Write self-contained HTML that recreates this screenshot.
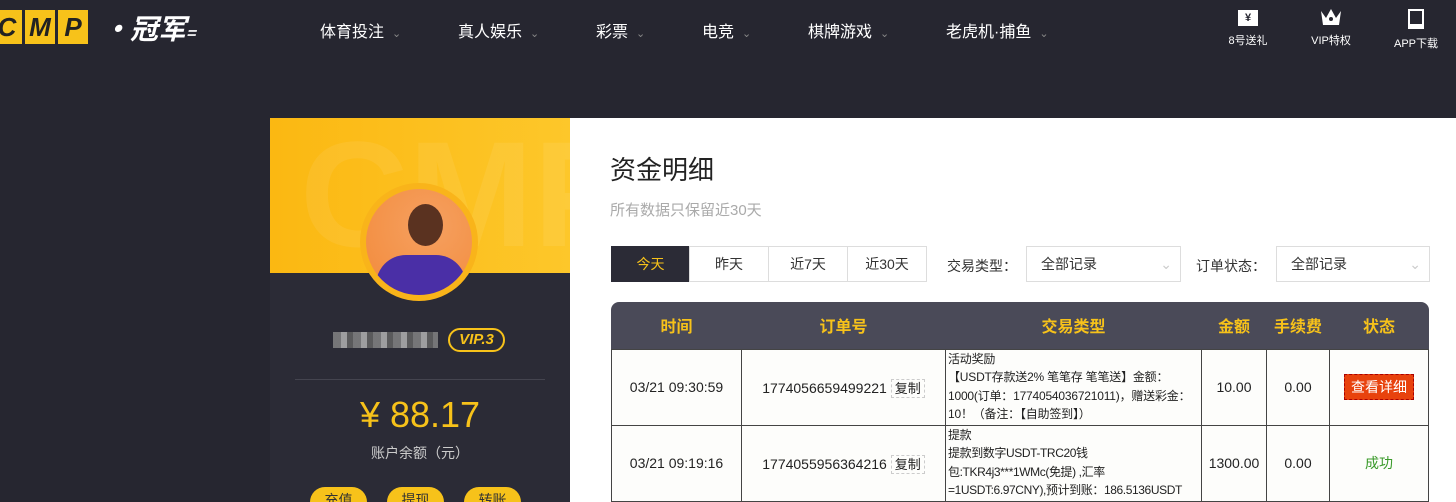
<!DOCTYPE html><html><head><meta charset="utf-8"><style>
*{margin:0;padding:0;box-sizing:border-box}
html,body{width:1456px;height:502px;overflow:hidden}
body{background:#262630;font-family:"Liberation Sans","Noto Sans CJK SC",sans-serif;position:relative;color:#333}
.a{position:absolute}
.nav{color:#fff;font-size:16px;top:18px}
.nav span{color:#888;font-size:11px;margin-left:8px}
.ic{color:#fff;font-size:11px;text-align:center;top:6px;width:60px}
.side{left:270px;top:118px;width:300px;height:384px;background:#2b2b36;overflow:hidden}
.main{left:570px;top:118px;width:886px;height:384px;background:#fff}
.tb{top:246px;height:36px;border:1px solid #ddd;font-size:14px;line-height:34px;text-align:center;background:#fff}
table{position:absolute;left:611px;top:302px;width:818px;border-collapse:collapse;font-size:14px;table-layout:fixed}
th{color:#f7c21a;height:47px;font-size:16px;font-weight:bold}
td{border:1px solid #444;background:#fdfdfb;text-align:center;height:76px;color:#222;overflow:hidden}
td.l{text-align:left;font-size:12px;line-height:18.5px;padding:0 2px;vertical-align:top;letter-spacing:-0.2px}
.lb{display:inline-block;background:#f7c21a;color:#222;width:30px;height:34px;text-align:center;line-height:34px;margin-right:3px}
</style></head><body>
<div class="a" style="left:-8px;top:10px;font:italic 900 26px 'Liberation Sans'"><span class="lb">C</span><span class="lb">M</span><span class="lb">P</span></div>
<div class="a" style="left:102px;top:8px;font:italic bold 28px 'Noto Sans CJK SC';color:#fff">·冠军<span style="font-size:16px">=</span></div>
<div class="a nav" style="left:320px">体育投注<span>⌄</span></div>
<div class="a nav" style="left:458px">真人娱乐<span>⌄</span></div>
<div class="a nav" style="left:596px">彩票<span>⌄</span></div>
<div class="a nav" style="left:702px">电竞<span>⌄</span></div>
<div class="a nav" style="left:808px">棋牌游戏<span>⌄</span></div>
<div class="a nav" style="left:946px">老虎机·捕鱼<span>⌄</span></div>
<div class="a ic" style="left:1218px"><div style="margin:4px auto 6px;width:20px;height:16px;background:#fff;color:#262630;font-size:11px;font-weight:bold;line-height:16px">¥</div>8号送礼</div>
<div class="a ic" style="left:1301px"><svg width="24" height="22" viewBox="0 0 24 20" style="display:block;margin:0 auto 4px"><path d="M2 4L7 11L12 2L17 11L22 4L20 18H4Z" fill="#fff"/><circle cx="12" cy="12" r="2" fill="#262630"/></svg>VIP特权</div>
<div class="a ic" style="left:1386px"><div style="margin:3px auto 6px;width:16px;height:20px;border:2px solid #fff;border-bottom-width:5px"></div>APP下载</div>
<div class="a side">
<div style="height:155px;background:linear-gradient(90deg,#fbb812,#fdc72a);position:relative;overflow:hidden"><div class="a" style="left:30px;top:-10px;font:bold 150px 'Liberation Sans';color:rgba(255,255,255,.07)">CMP</div></div>
<div class="a" style="left:90px;top:65px;width:118px;height:118px;border-radius:50%;background:#f9b41a;padding:6px"><div style="width:100%;height:100%;border-radius:50%;background:radial-gradient(circle at 60% 35%,#f6a060,#f28a3a);overflow:hidden;position:relative"><div class="a" style="left:42px;top:15px;width:35px;height:42px;border-radius:50%;background:#5a3220"></div><div class="a" style="left:10px;top:66px;width:90px;height:50px;border-radius:30px 30px 0 0;background:#4a2fa6"></div></div></div>
<div class="a" style="left:63px;top:214px;width:105px;height:16px;background:repeating-linear-gradient(90deg,#888 0 8px,#bbb 8px 14px,#666 14px 20px);opacity:.8"></div>
<div class="a" style="left:178px;top:210px;width:57px;height:24px;border:2px solid #f7c21a;border-radius:12px;color:#f7c21a;font:italic bold 15px 'Liberation Sans';text-align:center;line-height:20px">VIP.3</div>
<div class="a" style="left:25px;top:261px;width:250px;height:1px;background:#44444f"></div>
<div class="a" style="left:0;top:276px;width:300px;text-align:center;color:#f7c21a;font-size:36px">¥ 88.17</div>
<div class="a" style="left:0;top:325px;width:300px;text-align:center;color:#ccc;font-size:14px">账户余额（元）</div>
<div class="a" style="left:40px;top:369px;width:57px;height:30px;border-radius:15px;background:#f7c21a;text-align:center;font-size:14px;line-height:26px">充值</div>
<div class="a" style="left:117px;top:369px;width:57px;height:30px;border-radius:15px;background:#f7c21a;text-align:center;font-size:14px;line-height:26px">提现</div>
<div class="a" style="left:194px;top:369px;width:57px;height:30px;border-radius:15px;background:#f7c21a;text-align:center;font-size:14px;line-height:26px">转账</div>
</div>
<div class="a main"></div>
<div class="a" style="left:610px;top:150px;font-size:26px;color:#222">资金明细</div>
<div class="a" style="left:610px;top:199px;font-size:15px;color:#aaa">所有数据只保留近30天</div>
<div class="a tb" style="left:611px;width:79px;background:#2b2b36;color:#f7c21a;border-color:#2b2b36">今天</div>
<div class="a tb" style="left:689px;width:80px">昨天</div>
<div class="a tb" style="left:768px;width:80px">近7天</div>
<div class="a tb" style="left:847px;width:80px">近30天</div>
<div class="a" style="left:947px;top:256px;font-size:14px">交易类型：</div>
<div class="a tb" style="left:1026px;width:155px;text-align:left;padding-left:14px">全部记录<span style="float:right;margin-right:8px;color:#ccc">⌄</span></div>
<div class="a" style="left:1196px;top:256px;font-size:14px">订单状态：</div>
<div class="a tb" style="left:1276px;width:154px;text-align:left;padding-left:14px">全部记录<span style="float:right;margin-right:8px;color:#ccc">⌄</span></div>
<div class="a" style="left:611px;top:302px;width:818px;height:47px;background:#4a4a58;border-radius:8px 8px 0 0"></div>
<table><colgroup><col style="width:130px"><col style="width:204px"><col style="width:256px"><col style="width:65px"><col style="width:63px"><col></colgroup>
<tr><th>时间</th><th>订单号</th><th>交易类型</th><th>金额</th><th>手续费</th><th>状态</th></tr>
<tr><td>03/21 09:30:59</td><td>1774056659499221 <span style="border:1px dashed #ccc;font-size:13px;padding:1px 3px">复制</span></td><td class="l"><div style="height:75px;overflow:hidden">活动奖励<br>【USDT存款送2% 笔笔存 笔笔送】金额：1000(订单：1774054036721011)，赠送彩金：10！（备注：【自助签到】）</div></td><td>10.00</td><td>0.00</td><td><span style="background:#e8420d;color:#fff;padding:4px 6px;border:1px dashed #a00">查看详细</span></td></tr>
<tr><td>03/21 09:19:16</td><td>1774055956364216 <span style="border:1px dashed #ccc;font-size:13px;padding:1px 3px">复制</span></td><td class="l"><div style="height:75px;overflow:hidden;letter-spacing:-0.4px">提款<br>提款到数字USDT-TRC20钱<br>包:TKR4j3***1WMc(免提) ,汇率<br>=1USDT:6.97CNY),预计到账：186.5136USDT</div></td><td>1300.00</td><td>0.00</td><td style="color:#3a9a2a">成功</td></tr></table>
</body></html>
